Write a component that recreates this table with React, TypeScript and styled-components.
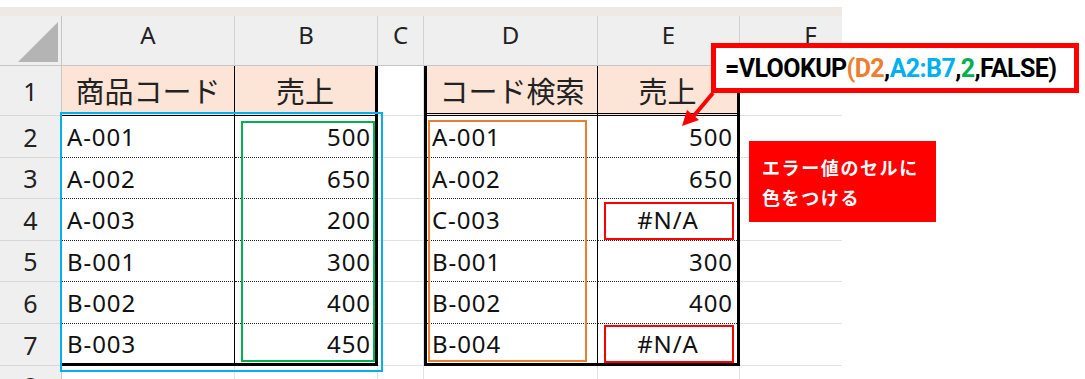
import styled, { createGlobalStyle } from 'styled-components'

const GlobalStyle = createGlobalStyle`
   html, body {
      margin: 0;
      padding: 0;
      background: #fff;
   }
   body {
      font-family: 'Noto Sans', 'Noto Sans CJK JP', sans-serif;
      color: #111;
   }
`

const COLS = ['A', 'B', 'C', 'D', 'E', 'F']
const ROWS = [1, 2, 3, 4, 5, 6, 7]

type Row = [string, string]

const salesTable = {
   head: ['商品コード', '売上'],
   rows: [
      ['A-001', '500'],
      ['A-002', '650'],
      ['A-003', '200'],
      ['B-001', '300'],
      ['B-002', '400'],
      ['B-003', '450'],
   ] as Row[],
}

const lookupTable = {
   head: ['コード検索', '売上'],
   rows: [
      ['A-001', '500'],
      ['A-002', '650'],
      ['C-003', '#N/A'],
      ['B-001', '300'],
      ['B-002', '400'],
      ['B-004', '#N/A'],
   ] as Row[],
}

const DataTable = ({ col, data, boxed }: { col: number; data: typeof salesTable; boxed?: boolean }) => (
   <Table $col={col} $boxed={boxed}>
      {data.head.map((h, i) => (
         <HeadCell key={h} $first={i === 0}>
            {h}
         </HeadCell>
      ))}
      {data.rows.map(([code, value], r) => {
         const last = r === data.rows.length - 1
         return [
            <Cell key={`c${r}`} $first $last={last}>
               {code}
            </Cell>,
            <Cell
               key={`v${r}`}
               $last={last}
               $align={value.startsWith('#') ? 'center' : 'flex-end'}
            >
               {value}
            </Cell>,
         ]
      })}
   </Table>
)

const App = () => {
   return (
      <Page>
         <GlobalStyle />
         <Strip />
         <Sheet>
            <Corner>
               <svg width="40" height="40" viewBox="0 0 40 40">
                  <polygon points="0,40 40,40 40,0" fill="#b4b4b4" />
               </svg>
            </Corner>
            {COLS.map((c) => (
               <ColHead key={c}>{c}</ColHead>
            ))}
            <DataTable col={2} data={salesTable} />
            <DataTable col={5} data={lookupTable} boxed />
            {ROWS.map((n) => [
               <RowHead key={`h${n}`}>{n}</RowHead>,
               <Blank key={`c${n}`} />,
               <Blank key={`f${n}`} />,
            ])}
            <RowHead>8</RowHead>
            {COLS.map((c) => (
               <Blank key={`8${c}`} />
            ))}
         </Sheet>

         <Frame $x={60} $y={112} $w={323} $h={260} $c="#00b0f0" />
         <Frame $x={241} $y={121} $w={134} $h={241} $c="#00b050" />
         <Frame $x={428} $y={120} $w={159} $h={242} $c="#ed7d31" />
         <Frame $x={604} $y={202} $w={130} $h={38} $c="#ff0000" />
         <Frame $x={604} $y={325} $w={130} $h={38} $c="#ff0000" />

         <Arrow width="52" height="46" viewBox="0 0 52 46">
            <line x1="43" y1="7" x2="22" y2="32" stroke="#ff0000" strokeWidth="4" />
            <polygon points="12,40 17,24 29,34" fill="#ff0000" />
         </Arrow>

         <Formula>
            =VLOOKUP<Ref $c="#ed7d31">(D2</Ref>,<Ref $c="#00b0f0">A2:B7</Ref>,
            <Ref $c="#00b050">2</Ref>,FALSE)
         </Formula>

         <Note>
            エラー値のセルに
            <br />
            色をつける
         </Note>
      </Page>
   )
}

export default App

const Page = styled.div`
   position: relative;
   width: 1085px;
   height: 379px;
   overflow: hidden;
   background: #fff;
`
const Strip = styled.div`
   width: 842px;
   height: 9px;
   margin-top: 7px;
   background: #eee9e5;
`
const Sheet = styled.div`
   width: 842px;
   overflow: hidden;
   display: grid;
   grid-template-columns: 62px 173px 143px 46px 174px 142px 142px;
   grid-template-rows: 50px 50px 42px 41px 42px 41px 42px 42px 41px;
`
const Corner = styled.div`
   background: #efefef;
   border-right: 1px solid #c6c6c6;
   border-bottom: 1px solid #c6c6c6;
   display: flex;
   justify-content: flex-end;
   align-items: flex-end;
   padding: 0 3px 3px 0;
`
const ColHead = styled.div`
   background: #efefef;
   border-right: 1px solid #d2d2d2;
   border-bottom: 1px solid #c6c6c6;
   display: flex;
   justify-content: center;
   align-items: center;
   padding-bottom: 12px;
   font-size: 24px;
   color: #222;
`
const RowHead = styled.div`
   background: #efefef;
   border-right: 1px solid #c6c6c6;
   border-bottom: 1px solid #d6d6d6;
   display: flex;
   justify-content: center;
   align-items: center;
   font-size: 25px;
   color: #222;
`
const Blank = styled.div`
   border-right: 1px solid #e1e1e1;
   border-bottom: 1px solid #e1e1e1;
`
const Table = styled.div<{ $col: number; $boxed?: boolean }>`
   grid-column: ${(p) => p.$col} / span 2;
   grid-row: 2 / span 7;
   display: grid;
   grid-template-columns: ${(p) => (p.$boxed ? '171px 139px' : '173px 140px')};
   grid-template-rows: 50px 42px 41px 42px 41px 42px 39px;
   border-right: 3px solid #000;
   border-bottom: 3px solid #000;
   border-left: ${(p) => (p.$boxed ? '3px solid #000' : 'none')};
`
const HeadCell = styled.div<{ $first?: boolean }>`
   background: #fce4d6;
   border-bottom: 3px double #000;
   border-right: ${(p) => (p.$first ? '1px solid #000' : 'none')};
   display: flex;
   justify-content: center;
   align-items: center;
   font-family: 'Noto Sans CJK JP', sans-serif;
   font-size: 29px;
   color: #222;
`
const Cell = styled.div<{ $first?: boolean; $last?: boolean; $align?: string }>`
   border-right: ${(p) => (p.$first ? '1px solid #000' : 'none')};
   border-bottom: ${(p) => (p.$last ? 'none' : '1px dotted #222')};
   display: flex;
   align-items: center;
   justify-content: ${(p) => p.$align ?? 'flex-start'};
   padding: 0 4px 0 5px;
   font-size: 24px;
   letter-spacing: 0.9px;
`
const Frame = styled.div<{ $x: number; $y: number; $w: number; $h: number; $c: string }>`
   position: absolute;
   left: ${(p) => p.$x}px;
   top: ${(p) => p.$y}px;
   width: ${(p) => p.$w}px;
   height: ${(p) => p.$h}px;
   box-sizing: border-box;
   border: 2px solid ${(p) => p.$c};
   pointer-events: none;
`
const Arrow = styled.svg`
   position: absolute;
   left: 670px;
   top: 86px;
`
const Formula = styled.div`
   position: absolute;
   left: 711px;
   top: 43px;
   width: 368px;
   height: 50px;
   box-sizing: border-box;
   border: 5px solid #ff0000;
   background: #fff;
   display: flex;
   align-items: center;
   padding-left: 9px;
   font-family: Roboto, sans-serif;
   font-weight: 700;
   font-size: 25px;
   letter-spacing: -0.6px;
   color: #000;
   white-space: pre;
`
const Ref = styled.span<{ $c: string }>`
   color: ${(p) => p.$c};
`
const Note = styled.div`
   position: absolute;
   left: 749px;
   top: 141px;
   width: 187px;
   height: 81px;
   box-sizing: border-box;
   background: #ff0000;
   padding: 11px 0 0 13px;
   font-family: 'Noto Sans CJK JP', sans-serif;
   font-weight: 700;
   font-size: 18px;
   line-height: 30px;
   letter-spacing: 1.6px;
   color: #fff;
`
